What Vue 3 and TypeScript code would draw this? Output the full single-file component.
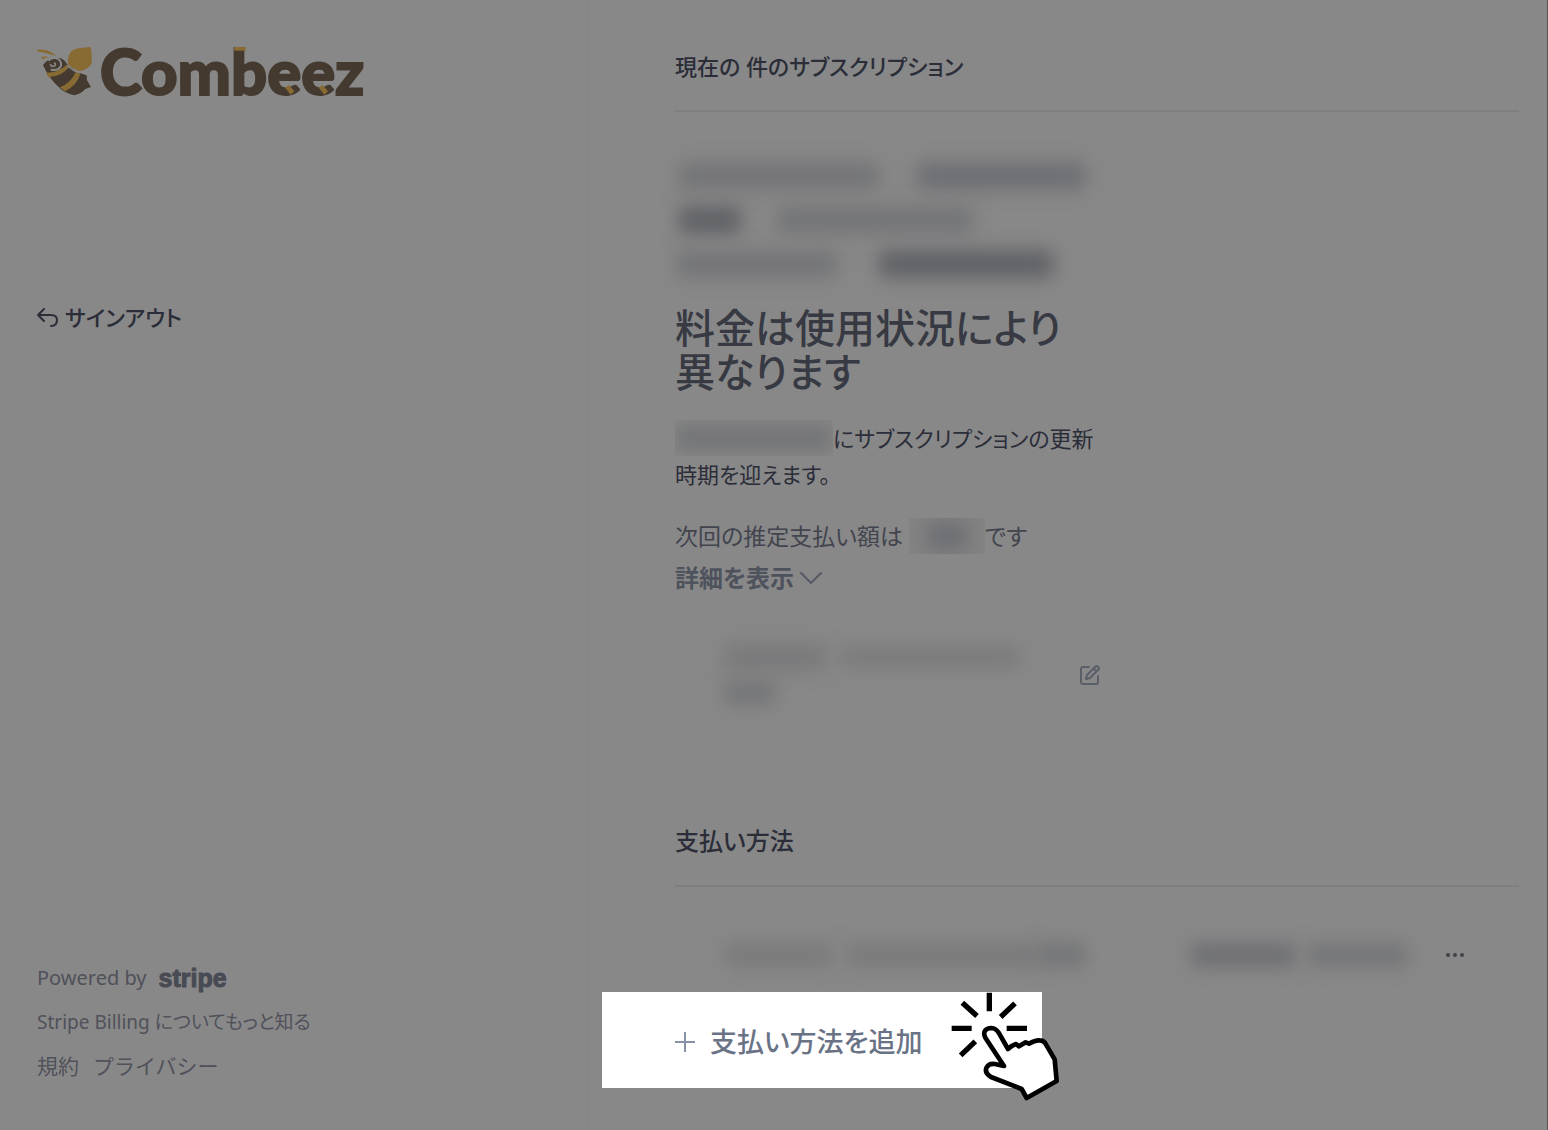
<script setup lang="ts">
interface Bar {
  width: number
  gap: number
  tone: 'light' | 'mid' | 'dark'
}

const planLines: Bar[][] = [
  [{ width: 200, gap: 4, tone: 'light' }, { width: 168, gap: 38, tone: 'mid' }],
  [{ width: 62, gap: 4, tone: 'dark' }, { width: 196, gap: 36, tone: 'light' }],
  [{ width: 160, gap: 2, tone: 'light' }, { width: 174, gap: 42, tone: 'dark' }],
]
</script>

<template>
  <div class="page">
    <aside class="sidebar">
      <svg class="logo" viewBox="51 45 990 156" role="img" aria-label="Combeez">
        <path d="M69 105 Q84 84 108 83 Q126 82 135 94 L146 109 L172 127 L200 136 L201 151 L213 171 L196 177 Q184 191 163 196 Q135 190 119 174 Q86 145 69 105Z" fill="#443a30" />
        <path d="M78 128 Q116 128 139 105 L147 112 Q126 139 85 142Z M120 172 Q154 158 167 126 L181 131 Q172 165 135 184Z M144 102 C142 73 153 56 181 54 L212 51 Q218 85 214 102 Q202 119 180 124 Q158 118 144 102Z M51 59 Q87 54 109 78 Q84 70 51 64Z M62 82 Q77 77 86 82 Q76 84 69 88Z" fill="#876b33" />
        <path d="M86 92 Q92 82 108 84 Q126 90 123 108 Q114 124 92 119" fill="none" stroke="#888" stroke-width="6" />
        <path d="M91 102 Q94 112 104 108 Q109 101 102 98" fill="none" stroke="#888" stroke-width="5" />
        <path d="M141 106 Q157 123 179 128" fill="none" stroke="#888" stroke-width="4" />
        <text x="240" y="195" class="wordmark">Combeez</text>
        <path d="M643 51h34v11h-34z M795 173l12-8 16 19-11 10z M896 173l12-8 16 19-11 10z" fill="#876b33" />
      </svg>

      <a class="signout" href="#signout">
        <svg width="22" height="22" viewBox="0 0 22 22" fill="none" stroke="#2b2d38" stroke-width="2" stroke-linecap="round" stroke-linejoin="round">
          <path d="M7 3 L1 9 L7 15 M1 9 H14 Q20 9 20 14 Q20 20 14 20" />
        </svg>
        サインアウト
      </a>

      <footer class="footer">
        <a class="powered" href="#stripe">Powered by <strong>stripe</strong></a>
        <a class="billing" href="#billing">Stripe Billing についてもっと知る</a>
        <nav class="legal">
          <a href="#terms">規約</a>
          <a href="#privacy">プライバシー</a>
        </nav>
      </footer>
    </aside>

    <main class="main">
      <section class="subscription">
        <h2>現在の 件のサブスクリプション</h2>
        <div class="detail">
          <div class="plan" aria-hidden="true">
            <div v-for="(line, i) in planLines" :key="i" class="plan-line">
              <span
                v-for="(bar, j) in line"
                :key="j"
                class="bar"
                :class="bar.tone"
                :style="{ width: bar.width + 'px', marginLeft: bar.gap + 'px' }"
              />
            </div>
          </div>
          <h3>料金は使用状況により<br>異なります</h3>
          <p class="renewal"><span class="patch date"><i class="bar light" /></span>にサブスクリプションの更新<br>時期を迎えます。</p>
          <p class="estimate">次回の推定支払い額は <span class="patch amount"><i class="bar mid" /></span>です</p>
          <button class="more" type="button">
            詳細を表示
            <svg width="22" height="14" viewBox="0 0 22 14" fill="none" stroke="#555a64" stroke-width="2" stroke-linecap="round" stroke-linejoin="round"><path d="M1 2 L11 12 L21 2" /></svg>
          </button>
          <div class="card-row">
            <div class="card-lines" aria-hidden="true">
              <div class="card-line"><span class="bar faint card-name" /><span class="bar faint card-brand" /></div>
              <div class="card-line"><span class="bar light card-digits" /></div>
            </div>
            <button class="edit" type="button" aria-label="編集">
              <svg width="20" height="20" viewBox="0 0 20 20" fill="none" stroke="#5a5e67" stroke-width="2" stroke-linecap="round" stroke-linejoin="round">
                <path d="M9 2 H3 Q1 2 1 4 V17 Q1 19 3 19 H16 Q18 19 18 17 V11" />
                <path d="M6 14 L7 10 L15 2 Q17 0 18 2 Q20 3 18 5 L10 13 Z M14 4 L16 6" />
              </svg>
            </button>
          </div>
        </div>
      </section>

      <section class="payment">
        <h2>支払い方法</h2>
        <div class="method">
          <span class="bar faint method-name" />
          <span class="bar faint method-brand" />
          <span class="bar light method-digits" />
          <span class="bar mid method-expiry" />
          <span class="bar light method-date" />
          <button class="dots" type="button" aria-label="その他">
            <svg width="20" height="6" viewBox="0 0 20 6" fill="#3f414b"><circle cx="3" cy="3" r="2" /><circle cx="10" cy="3" r="2" /><circle cx="17" cy="3" r="2" /></svg>
          </button>
        </div>
        <button class="add" type="button">
          <svg width="22" height="22" viewBox="0 0 22 22" stroke="#8792a8" stroke-width="2"><path d="M11 1 V21 M1 11 H21" /></svg>
          支払い方法を追加
          <svg class="pointer" width="130" height="130" viewBox="0 0 390 390" fill="none" stroke="#000">
            <path d="M148 38 V94 M67 68 L111 108 M225 70 L182 111 M35 145 H95 M200 145 H261 M106 184 L62 226" stroke-width="16" />
            <path d="M192 258 L136 173 C127 155 137 144 154 144 Q168 145 176 158 L204 207 Q215 196 228 192 L237 199 L257 187 L267 191 Q286 180 299 181 Q310 181 316 190 L344 238 L350 303 L260 354 L245 327 L153 291 Q132 277 140 262 Q147 249 165 252 Z" fill="#fff" stroke-width="14" stroke-linejoin="round" />
          </svg>
        </button>
      </section>
    </main>
  </div>
</template>

<style>
body {
  margin: 0;
  background: #888;
}
</style>

<style scoped>
.page {
  display: flex;
  box-sizing: border-box;
  min-height: 100vh;
  border-right: 1px solid #555;
  background: #888;
  color: #2b2d38;
  font-family: "Noto Sans", "Noto Sans CJK JP", sans-serif;
  font-feature-settings: "palt";
  font-size: 22px;
  line-height: 36px;
}

a {
  color: inherit;
  text-decoration: none;
}

button {
  padding: 0;
  border: 0;
  background: none;
  color: inherit;
  font: inherit;
  font-feature-settings: inherit;
  cursor: pointer;
}

svg {
  display: block;
  flex: none;
}

.sidebar {
  display: flex;
  flex: 0 0 589px;
  flex-direction: column;
  align-items: flex-start;
  box-sizing: border-box;
  padding: 45px 37px 46px;
  border-right: 1px solid #848484;
}

.logo {
  width: 330px;
  height: 52px;
  overflow: visible;
}

.wordmark {
  fill: #443a30;
  stroke: #443a30;
  stroke-width: 6px;
  font-family: Lato, sans-serif;
  font-size: 190px;
  font-weight: 900;
}

.signout {
  display: flex;
  align-items: center;
  gap: 6px;
  margin-top: 202px;
  font-weight: 500;
}

.footer {
  display: flex;
  flex-direction: column;
  gap: 8px;
  margin-top: auto;
  color: #50515a;
  font-size: 20px;
}

.powered {
  display: flex;
  align-items: center;
  gap: 12px;
}

.powered strong {
  color: #484a54;
  font-family: "Liberation Sans", sans-serif;
  font-size: 25px;
  font-weight: 700;
  -webkit-text-stroke: 1px #484a54;
}

.billing {
  font-size: 19px;
}

.legal {
  display: flex;
  gap: 14px;
  font-feature-settings: normal;
  font-size: 21px;
}

.main {
  flex: 1;
  padding: 48px 28px 42px 86px;
}

h2,
h3,
p {
  margin: 0;
}

h2 {
  padding-bottom: 26px;
  border-bottom: 2px solid #7f7f7f;
  font-size: 22px;
  font-weight: 500;
}

.payment h2 {
  font-size: 24px;
}

.detail {
  width: 425px;
}

.plan {
  display: flex;
  flex-direction: column;
  gap: 8px;
  padding: 46px 0 24px;
}

.plan-line {
  display: flex;
  align-items: center;
  height: 36px;
}

.bar {
  display: block;
  flex: none;
  height: 28px;
  filter: blur(9px);
}

.faint {
  background: #7a7a7c;
}

.light {
  background: #747577;
}

.mid {
  background: #6e6f74;
}

.dark {
  background: #616267;
}

h3 {
  color: #373943;
  font-size: 40px;
  font-weight: 500;
  line-height: 44px;
}

.renewal {
  margin-top: 26px;
  white-space: nowrap;
}

.patch {
  display: inline-flex;
  align-items: center;
  height: 36px;
  overflow: hidden;
  vertical-align: bottom;
}

.date {
  width: 158px;
}

.date .bar {
  width: 158px;
}

.estimate {
  margin-top: 26px;
  color: #42444e;
  font-size: 23px;
}

.amount {
  justify-content: center;
  width: 76px;
  background: #838383;
}

.amount .bar {
  width: 42px;
}

.more {
  display: flex;
  align-items: center;
  gap: 6px;
  margin-top: 6px;
  color: #4d525c;
  font-size: 24px;
  font-weight: 700;
}

.card-row {
  display: flex;
  align-items: center;
  justify-content: space-between;
  margin-top: 43px;
}

.card-lines {
  flex: 1;
  padding-left: 50px;
}

.card-line {
  display: flex;
  align-items: center;
  gap: 16px;
  height: 36px;
}

.card-name {
  width: 100px;
}

.card-brand {
  width: 178px;
  height: 20px;
}

.card-digits {
  width: 50px;
  height: 24px;
}

.payment {
  margin-top: 112px;
}

.method {
  display: flex;
  align-items: center;
  box-sizing: border-box;
  height: 105px;
  padding: 30px 54px 0 50px;
}

.method .bar {
  height: 24px;
}

.method-name {
  width: 106px;
}

.method-brand {
  width: 190px;
  margin-left: 16px;
}

.method-digits {
  width: 48px;
}

.method-expiry {
  width: 104px;
  margin-left: 106px;
}

.method-date {
  width: 98px;
  margin-left: 14px;
}

.dots {
  margin-left: auto;
  padding: 15px 0;
}

.add {
  position: relative;
  display: flex;
  align-items: center;
  gap: 14px;
  box-sizing: border-box;
  width: 440px;
  height: 96px;
  margin-left: -73px;
  padding: 3px 0 0 72px;
  background: #fff;
  color: #6a7386;
  font-size: 27px;
  font-weight: 500;
}

.pointer {
  position: absolute;
  top: -12px;
  right: -28px;
}
</style>
